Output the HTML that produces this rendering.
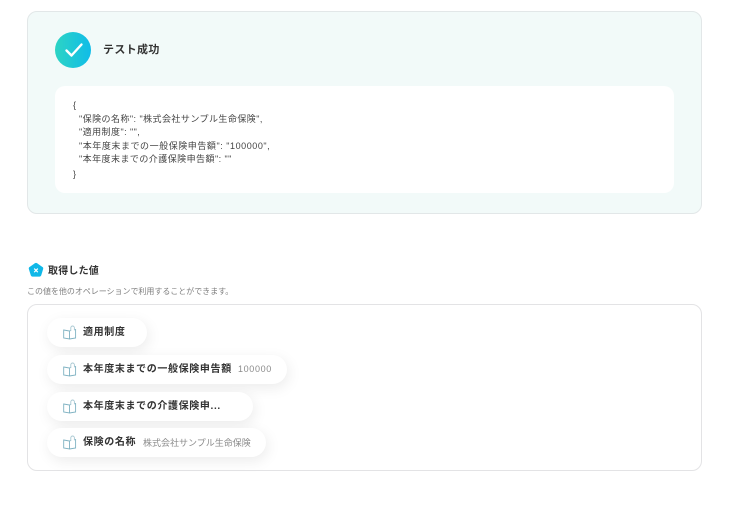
<!DOCTYPE html>
<html lang="ja">
<head>
<meta charset="utf-8">
<style>
html,body{margin:0;padding:0;background:#fff;}
body{width:744px;height:508px;position:relative;overflow:hidden;font-family:"Liberation Sans","Noto Sans CJK JP",sans-serif;color:#2e2e2e;}
.abs{position:absolute;white-space:nowrap;}
.panel{position:absolute;left:27px;top:11px;width:673px;height:201px;background:#f2faf9;border:1px solid #e2e7e8;border-radius:10px;}
.check{position:absolute;left:55px;top:32px;width:36px;height:36px;border-radius:50%;background:linear-gradient(90deg,#2dd4c4,#10bce8);}
.code{position:absolute;left:55px;top:86px;width:619px;height:107px;background:#fff;border-radius:10px;}
.code div{position:absolute;font-size:9px;line-height:13px;color:#444;white-space:nowrap;letter-spacing:.45px;}
.box{position:absolute;left:27px;top:304px;width:673px;height:165px;background:#fff;border:1px solid #e3e3e5;border-radius:10px;}
.pill{position:absolute;left:47px;height:29px;background:#fff;border-radius:15px;box-shadow:2px 4px 14px rgba(0,0,0,.08);}
.pill svg{position:absolute;left:16px;top:7px;}
.pill b{position:absolute;left:36px;top:8px;font-size:10px;line-height:14px;font-weight:700;color:#333;white-space:nowrap;letter-spacing:.63px;}
.pill span{position:absolute;top:8px;font-size:9px;line-height:13px;color:#8b8b8b;white-space:nowrap;}
</style>
</head>
<body>
<div class="panel"></div>
<div class="check">
<svg width="36" height="36" viewBox="0 0 36 36"><path d="M11.5 18.5 L16.5 23.5 L26.5 12.5" fill="none" stroke="#fff" stroke-width="2.4" stroke-linecap="round" stroke-linejoin="round"/></svg>
</div>
<div class="abs" style="left:103px;top:43px;font-size:11px;line-height:15px;font-weight:700;color:#333;letter-spacing:.03em;">テスト成功</div>
<div class="code">
<div style="left:18px;top:13px;">{</div>
<div style="left:24px;top:27px;">"保険の名称": "株式会社サンプル生命保険",</div>
<div style="left:24px;top:40px;">"適用制度": "",</div>
<div style="left:24px;top:54px;letter-spacing:.55px;">"本年度末までの一般保険申告額": "100000",</div>
<div style="left:24px;top:67px;">"本年度末までの介護保険申告額": ""</div>
<div style="left:18px;top:82px;">}</div>
</div>

<svg class="abs" style="left:28px;top:262px;" width="16" height="16" viewBox="0 0 16 16"><path d="M6.9 1.2 Q8 .5 9.1 1.2 L14.6 5.1 Q15.5 5.8 15.2 6.9 L13.2 13.4 Q12.8 14.6 11.6 14.6 L4.4 14.6 Q3.2 14.6 2.8 13.4 L.8 6.9 Q.5 5.8 1.4 5.1 Z" fill="#10b8e8"/><path d="M6.2 6.6 L9.8 10.2 M9.8 6.6 L6.2 10.2" stroke="#fff" stroke-width="1.2"/></svg>
<div class="abs" style="left:48px;top:265px;font-size:10px;line-height:14px;font-weight:700;color:#333;letter-spacing:.02em;">取得した値</div>
<div class="abs" style="left:27px;top:286px;font-size:8px;line-height:12px;color:#808080;letter-spacing:-.03px;">この値を他のオペレーションで利用することができます。</div>

<div class="box"></div>

<div class="pill" style="top:318px;width:100px;">
<svg width="15" height="15" viewBox="0 0 15 15"><path d="M.7 5 L6.5 6 V14 L.7 13 Z M6.5 6 L7.5 5.6 M11.5 4.8 L12.6 4.6 V13 L6.5 14" fill="none" stroke="#7fb2c2" stroke-width=".9"/><path d="M7.8 6 V2.8 A1.8 1.8 0 0 1 11.4 2.8 V5.2" fill="none" stroke="#a8c8d2" stroke-width=".9"/></svg>
<b>適用制度</b>
</div>
<div class="pill" style="top:355px;width:240px;">
<svg width="15" height="15" viewBox="0 0 15 15"><path d="M.7 5 L6.5 6 V14 L.7 13 Z M6.5 6 L7.5 5.6 M11.5 4.8 L12.6 4.6 V13 L6.5 14" fill="none" stroke="#7fb2c2" stroke-width=".9"/><path d="M7.8 6 V2.8 A1.8 1.8 0 0 1 11.4 2.8 V5.2" fill="none" stroke="#a8c8d2" stroke-width=".9"/></svg>
<b>本年度末までの一般保険申告額</b><span style="left:191px;letter-spacing:.65px;">100000</span>
</div>
<div class="pill" style="top:392px;width:206px;">
<svg width="15" height="15" viewBox="0 0 15 15"><path d="M.7 5 L6.5 6 V14 L.7 13 Z M6.5 6 L7.5 5.6 M11.5 4.8 L12.6 4.6 V13 L6.5 14" fill="none" stroke="#7fb2c2" stroke-width=".9"/><path d="M7.8 6 V2.8 A1.8 1.8 0 0 1 11.4 2.8 V5.2" fill="none" stroke="#a8c8d2" stroke-width=".9"/></svg>
<b>本年度末までの介護保険申...</b>
</div>
<div class="pill" style="top:428px;width:219px;">
<svg width="15" height="15" viewBox="0 0 15 15"><path d="M.7 5 L6.5 6 V14 L.7 13 Z M6.5 6 L7.5 5.6 M11.5 4.8 L12.6 4.6 V13 L6.5 14" fill="none" stroke="#7fb2c2" stroke-width=".9"/><path d="M7.8 6 V2.8 A1.8 1.8 0 0 1 11.4 2.8 V5.2" fill="none" stroke="#a8c8d2" stroke-width=".9"/></svg>
<b>保険の名称</b><span style="left:96px;top:9px;">株式会社サンプル生命保険</span>
</div>
</body>
</html>
